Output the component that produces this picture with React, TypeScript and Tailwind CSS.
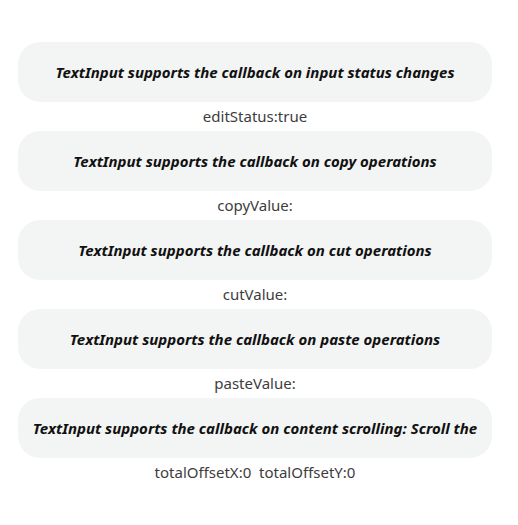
import React from 'react';

const sections = [
  { title: 'TextInput supports the callback on input status changes', value: 'editStatus:true' },
  { title: 'TextInput supports the callback on copy operations', value: 'copyValue:' },
  { title: 'TextInput supports the callback on cut operations', value: 'cutValue:' },
  { title: 'TextInput supports the callback on paste operations', value: 'pasteValue:' },
  { title: 'TextInput supports the callback on content scrolling: Scroll the', value: 'totalOffsetX:0\u00a0\u00a0totalOffsetY:0' },
];

const App: React.FC = () => {
  return (
    <div className="min-h-screen bg-white pt-[42px]" style={{ fontFamily: '"Noto Sans", sans-serif' }}>
      {sections.map((s) => (
        <div key={s.title} className="ml-[18px] w-[474px]">
          <div className="h-[60px] rounded-[22px] bg-[#f3f4f4] flex items-center justify-center overflow-hidden px-2">
            <span className="whitespace-nowrap text-[15px] font-bold italic text-[#111111]">{s.title}</span>
          </div>
          <div className="h-[29px] flex items-center justify-center text-[15px] text-[#3d3d3d]">
            {s.value}
          </div>
        </div>
      ))}
    </div>
  );
};

export default App;
